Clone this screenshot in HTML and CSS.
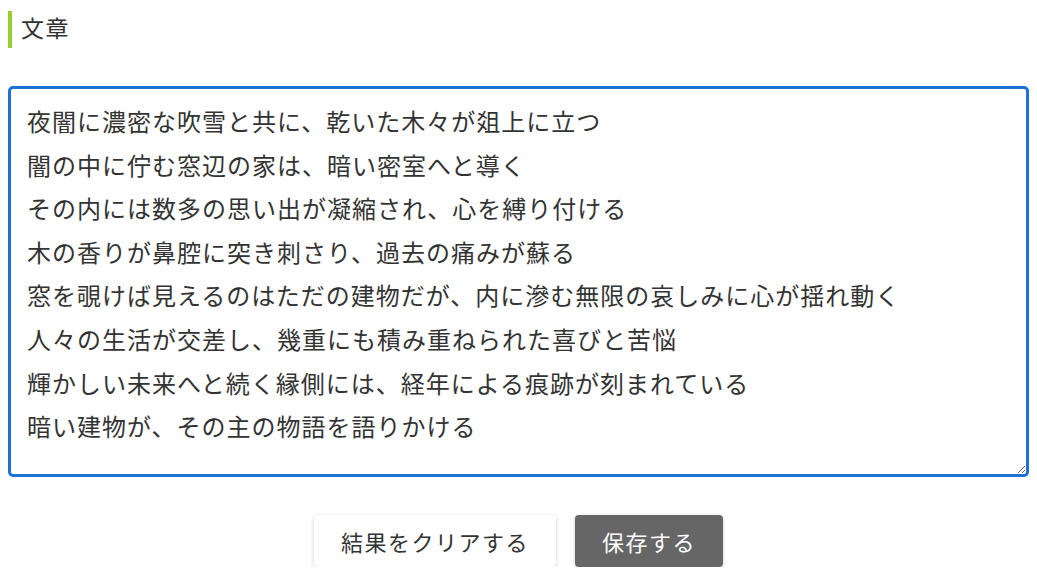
FILE: index.html
```html
<!DOCTYPE html>
<html lang="ja">
<head>
<meta charset="utf-8">
<title>文章</title>
<link rel="stylesheet" href="styles.css">
</head>
<body>
<h2 class="heading">文章</h2>
<textarea class="editor">夜闇に濃密な吹雪と共に、乾いた木々が爼上に立つ
闇の中に佇む窓辺の家は、暗い密室へと導く
その内には数多の思い出が凝縮され、心を縛り付ける
木の香りが鼻腔に突き刺さり、過去の痛みが蘇る
窓を覗けば見えるのはただの建物だが、内に滲む無限の哀しみに心が揺れ動く
人々の生活が交差し、幾重にも積み重ねられた喜びと苦悩
輝かしい未来へと続く縁側には、経年による痕跡が刻まれている
暗い建物が、その主の物語を語りかける</textarea>
<div class="actions">
  <button class="btn btn-light">結果をクリアする</button>
  <button class="btn btn-dark">保存する</button>
</div>
</body>
</html>
```
FILE: styles.css
```css
html, body {
  margin: 0;
  padding: 0;
  background: #fff;
}
body {
  padding: 11px 8px 0 8px;
  font-family: "Noto Sans CJK JP", "Noto Sans", sans-serif;
  color: #333;
}
.heading {
  margin: 0;
  height: 37px;
  box-sizing: border-box;
  border-left: 4px solid #9acd32;
  padding-left: 9px;
  font-size: 23px;
  font-weight: normal;
  line-height: 33px;
  letter-spacing: 1.5px;
}
.editor {
  display: block;
  margin-top: 38px;
  width: 100%;
  height: 391px;
  box-sizing: border-box;
  border: 3px solid #1f72d4;
  border-radius: 5px;
  padding: 10px 16px;
  outline: none;
  font-family: "Noto Sans CJK JP", "Noto Sans", sans-serif;
  font-size: 24px;
  line-height: 43.6px;
  letter-spacing: 1px;
  color: #333;
}
.actions {
  display: flex;
  justify-content: center;
  gap: 19px;
  margin-top: 38px;
}
.btn {
  font-family: "Noto Sans CJK JP", "Noto Sans", sans-serif;
  font-size: 22px;
  letter-spacing: 1.5px;
  height: 52px;
  padding: 0 27px;
  border: none;
  border-radius: 4px;
  cursor: pointer;
}
.btn-light {
  background: #fff;
  color: #333;
  box-shadow: 0 1px 4px rgba(0, 0, 0, 0.18);
}
.btn-dark {
  background: #666;
  color: #fff;
  box-shadow: 0 1px 4px rgba(0, 0, 0, 0.18);
}
```
